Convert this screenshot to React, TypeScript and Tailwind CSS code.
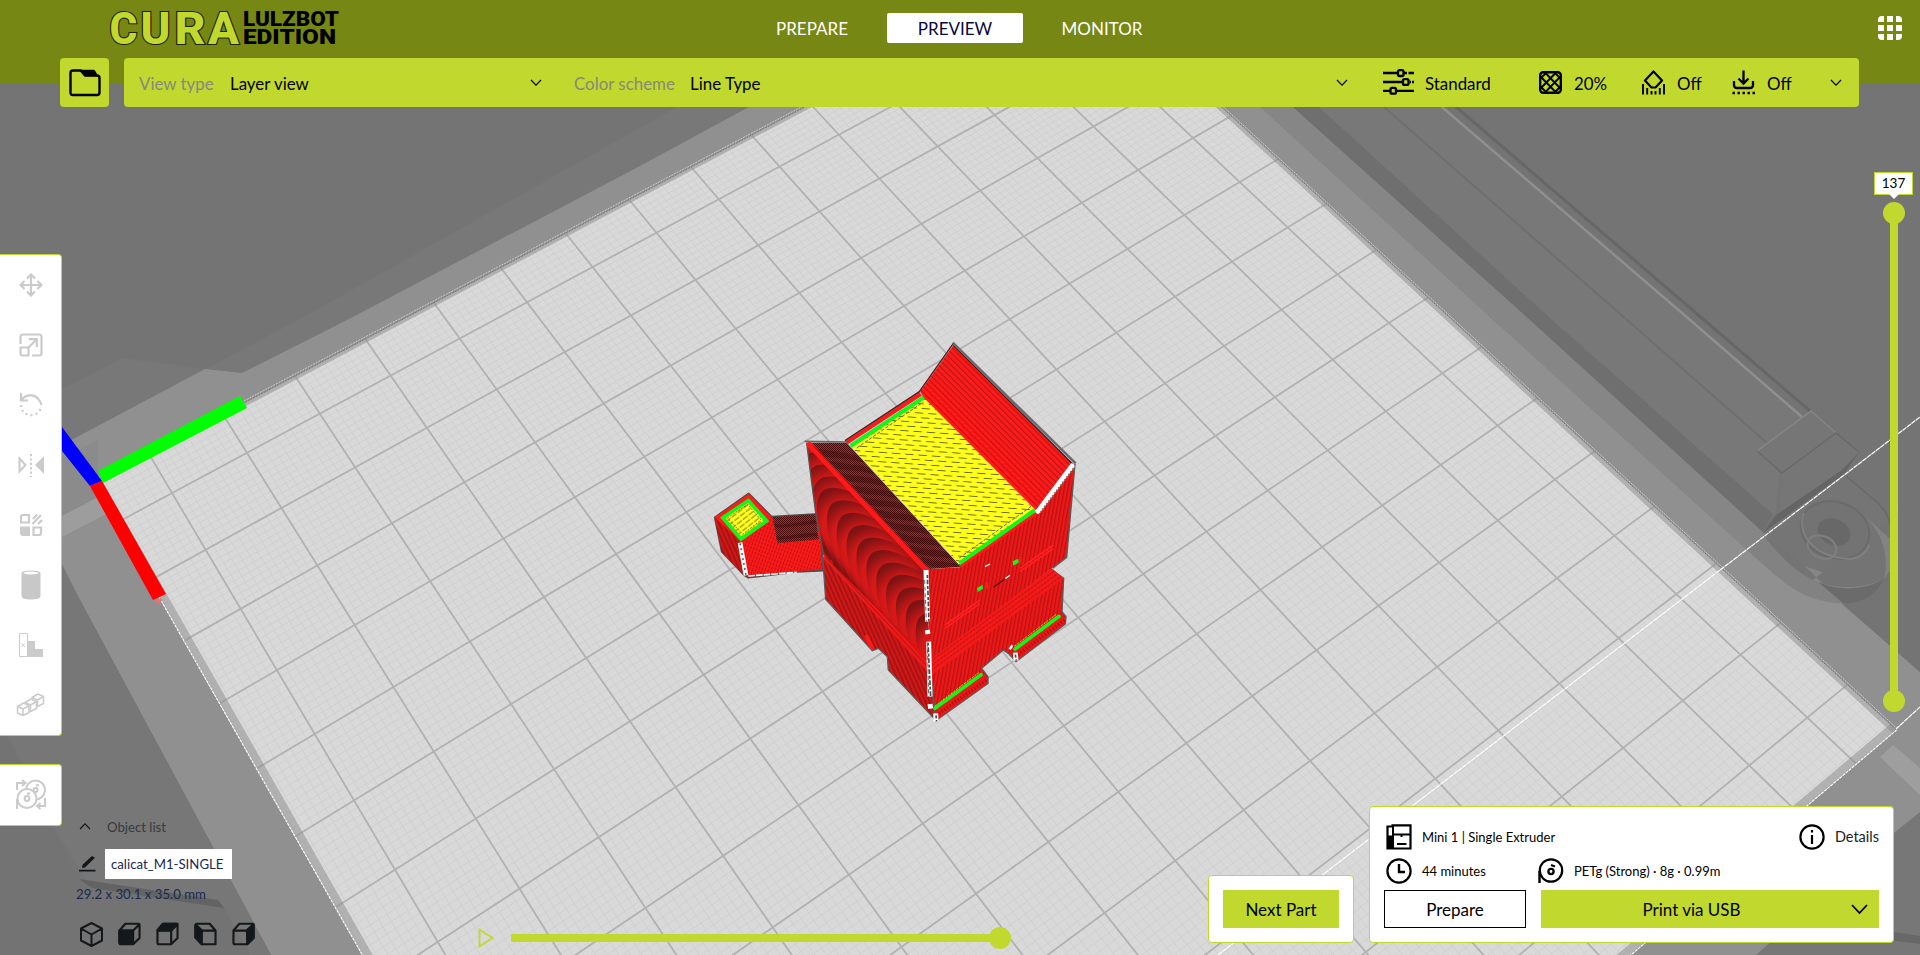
import React from "react";

type Pt = [number, number];

/* ---------- build plate projection ---------- */

function solve(a: number[][], b: number[]): number[] {
  const n = b.length;
  const m = a.map((r, i) => [...r, b[i]]);
  for (let c = 0; c < n; c++) {
    let p = c;
    for (let r = c + 1; r < n; r++) if (Math.abs(m[r][c]) > Math.abs(m[p][c])) p = r;
    [m[c], m[p]] = [m[p], m[c]];
    for (let r = 0; r < n; r++) {
      if (r === c) continue;
      const f = m[r][c] / m[c][c];
      for (let k = c; k <= n; k++) m[r][k] -= f * m[c][k];
    }
  }
  return m.map((r, i) => r[n] / r[i]);
}

const anchors: { plate: Pt; screen: Pt }[] = [
  { plate: [1, 1], screen: [172, 493] },
  { plate: [7, 1], screen: [395, 869.7] },
  { plate: [15, 15], screen: [1807.3, 717.7] },
  { plate: [1, 11], screen: [838.8, 134.7] },
];

const H = (() => {
  const a: number[][] = [];
  const b: number[] = [];
  for (const { plate, screen } of anchors) {
    const [u, v] = plate;
    const [x, y] = screen;
    a.push([u, v, 1, 0, 0, 0, -u * x, -v * x]);
    b.push(x);
    a.push([0, 0, 0, u, v, 1, -u * y, -v * y]);
    b.push(y);
  }
  return solve(a, b);
})();

function project(u: number, v: number): Pt {
  const w = H[6] * u + H[7] * v + 1;
  return [(H[0] * u + H[1] * v + H[2]) / w, (H[3] * u + H[4] * v + H[5]) / w];
}

const pts = (list: Pt[]) =>
  list
    .map(([u, v]) => project(u, v))
    .map(([x, y]) => `${x.toFixed(1)},${y.toFixed(1)}`)
    .join(" ");

const LO = 0.28;
const HI = 15.71;

function seg(u1: number, v1: number, u2: number, v2: number) {
  const [a, b] = project(u1, v1);
  const [c, d] = project(u2, v2);
  return `M${a.toFixed(1)} ${b.toFixed(1)}L${c.toFixed(1)} ${d.toFixed(1)}`;
}

let minor = "";
let major = "";
for (let k = 3; k <= 157; k++) {
  const t = k / 10;
  const d = seg(t, LO, t, HI) + seg(LO, t, HI, t);
  if (k % 10 === 0) major += d;
  else minor += d;
}

/* ---------- 3D viewport ---------- */

const ARCH = "M40 160C8 100 -16 0 20 -28C45 -46 90 -34 130 -10L200 40L220 260L60 220Z";

function Model() {
  const arches = Array.from({ length: 11 }, (_, k) => k);
  return (
    <g transform="translate(680 320) scale(0.33333)">
      <defs>
        <pattern id="front" width="11" height="24" patternUnits="userSpaceOnUse" patternTransform="rotate(10)">
          <rect width="11" height="24" fill="#ee1818" />
          <rect width="4" height="24" fill="#b81212" />
        </pattern>
        <pattern id="side" width="12" height="24" patternUnits="userSpaceOnUse" patternTransform="rotate(-24)">
          <rect width="12" height="24" fill="#d21717" />
          <rect width="5" height="24" fill="#a01212" />
        </pattern>
        <pattern id="slope" width="24" height="13" patternUnits="userSpaceOnUse" patternTransform="rotate(45)">
          <rect width="24" height="13" fill="#ff1a1a" />
          <rect width="24" height="3" fill="#b51414" />
        </pattern>
        <pattern id="mesh" width="6" height="6" patternUnits="userSpaceOnUse">
          <rect width="6" height="6" fill="#e01616" />
          <rect width="3" height="3" fill="#4a0808" />
          <rect x="3" y="3" width="3" height="3" fill="#4a0808" />
        </pattern>
        <pattern id="skin" width="40" height="28" patternUnits="userSpaceOnUse" patternTransform="rotate(4)">
          <rect width="40" height="28" fill="#ffff1e" />
          <path d="M2 4h25M22 18h18M0 18h7" stroke="#66660c" strokeWidth="3" />
        </pattern>
        <pattern id="skin2" width="22" height="13" patternUnits="userSpaceOnUse" patternTransform="rotate(-38)">
          <rect width="22" height="13" fill="#ffff1e" />
          <path d="M0 3h18" stroke="#7a7a0c" strokeWidth="3" />
        </pattern>
        <pattern id="tail" width="9" height="12" patternUnits="userSpaceOnUse" patternTransform="rotate(20)">
          <rect width="9" height="12" fill="#fb1919" />
          <rect width="3" height="9" fill="#bb1212" />
        </pattern>
        <radialGradient id="arch" gradientUnits="userSpaceOnUse" cx="88" cy="76" r="114">
          <stop offset="0" stopColor="#dc1818" />
          <stop offset="0.6" stopColor="#d61818" />
          <stop offset="0.86" stopColor="#9a1515" />
          <stop offset="1" stopColor="#7e1313" />
        </radialGradient>
        <clipPath id="faceClip">
          <path d="M380 372L738 752L748 1020L430 705L408 585Z" />
        </clipPath>
        <clipPath id="earClip">
          <path d="M385 368L500 368L842 740L738 748Z" />
        </clipPath>
      </defs>

      {/* tail */}
      <g stroke="#4c4c4c" strokeWidth="5" strokeLinejoin="round">
        <path d="M275 590L405 582L425 660L430 752L350 756L205 773L193 766L125 695L104 592L206 520Z" fill="url(#tail)" />
      </g>
      <path d="M104 592L180 660L193 766L125 695Z" fill="url(#side)" />
      <path d="M277 592L405 583L416 658L292 670Z" fill="url(#mesh)" />
      <path d="M280 612C330 618 370 600 410 600L412 612C370 612 330 627 286 622ZM288 650C330 650 370 636 412 640L414 648L292 660Z" fill="#2b0000" opacity="0.35" />
      <path d="M104 592L206 522L275 592L183 666Z" fill="#ff1a1a" />
      <path d="M128 593L205 542L260 603L183 657Z" fill="url(#skin2)" stroke="#14f51e" strokeWidth="11" />
      <path d="M142 594L203 553L243 600L188 643Z" fill="none" stroke="#77770c" strokeWidth="3" strokeDasharray="6 4" />
      <path d="M180 668L198 766" stroke="#fff" strokeWidth="14" />
      <path d="M180 670L198 766" stroke="#666" strokeWidth="5" strokeDasharray="6 9" />
      <path d="M205 768L350 757" stroke="#fff" strokeWidth="5" strokeDasharray="20 3" />

      {/* lower body */}
      <path d="M428 710L752 1060L765 1198L625 1050L622 1010L595 985L577 992L437 838Z" fill="url(#side)" stroke="#5a5a5a" strokeWidth="4" />
      <path d="M752 1060L1118 750L1151 775L1146 875L1158 890L1156 912L1008 1025L985 1000L970 990L905 1045L924 1070L924 1090L768 1202Z" fill="url(#front)" stroke="#5a5a5a" strokeWidth="4" />
      <path d="M768 1172L912 1062L922 1074L922 1090L768 1200Z" fill="#e81818" />
      <path d="M1005 995L1143 884L1156 894L1154 911L1008 1022Z" fill="#e81818" />
      <path d="M768 1186L922 1078M1006 1010L1154 900" stroke="#a81212" strokeWidth="10" strokeDasharray="4 6" />
      <path d="M765 1158L896 1058M1004 978L1130 882" stroke="#e6e01a" strokeWidth="3" strokeDasharray="6 4" />
      <path d="M765 1165L903 1064M1005 987L1137 889" stroke="#14f51e" strokeWidth="11" strokeLinecap="round" />
      <path d="M560 950L577 984" stroke="#ff1a1a" strokeWidth="12" strokeLinecap="round" />

      {/* ledge */}
      <path d="M428 712L452 700L752 1010L752 1066Z" fill="#ee1818" />
      <path d="M436 710L752 1050M442 705L752 1034M448 703L752 1020" stroke="#b21212" strokeWidth="3" />
      <path d="M750 1012L1115 745L1151 776L752 1068Z" fill="#f21919" />
      <path d="M752 1024L1122 754M752 1038L1132 762M752 1052L1142 770" stroke="#b81212" strokeWidth="3" strokeDasharray="9 3" />

      {/* front face */}
      <path d="M738 748L840 742L1070 575L1185 432L1160 712L1112 748L750 1018Z" fill="url(#front)" />
      <path d="M1185 432L1160 712L1118 745" fill="none" stroke="#5a5a5a" strokeWidth="4" />
      <path d="M795 925L900 850M1020 755L1120 685M795 915L900 840M1020 745L1120 675" stroke="#ff2020" strokeWidth="5" />
      <path d="M840 738L1070 577" stroke="#ff1a1a" strokeWidth="12" />

      {/* left face */}
      <path d="M380 372L738 752L748 1020L430 705L408 585Z" fill="#c21717" />
      <g clipPath="url(#faceClip)">
        {[0, 1, 2].map((k) => (
          <g key={k} transform={`translate(${350 + k * 20} ${428 + k * 36})`}>
            <path d="M0 140C0 40 0 -10 40 -28C62 -34 90 -30 130 -10L200 40L220 260L60 220Z" fill="url(#arch)" />
          </g>
        ))}
        {arches.map((k) => (
          <g key={k} transform={`translate(${409 + k * 29.6} ${540 + k * 37.3})`}>
            <path d={ARCH} fill="url(#arch)" />
          </g>
        ))}
      </g>
      <path d="M380 368L394 480L408 585L430 700" fill="none" stroke="#555" strokeWidth="4" />

      {/* left ear, inside */}
      <path d="M385 368L500 368L842 740L738 748Z" fill="url(#mesh)" />
      <g clipPath="url(#earClip)">
        {arches.map((k) => (
          <path
            key={k}
            d={`M${380 + k * 38} ${375 + k * 37}c50 24 100 10 200 48l0 14c-90 -32 -130 -16 -190 -38z`}
            fill="#200000"
            opacity="0.28"
          />
        ))}
      </g>
      <path d="M388 374L738 748" stroke="#ff1a1a" strokeWidth="17" strokeLinecap="round" />
      <path d="M400 378L742 742" stroke="#a11212" strokeWidth="3" />
      <path d="M374 364L502 366" stroke="#666" strokeWidth="5" />

      {/* top skin */}
      <path d="M735 232L1062 565L838 732L512 378Z" fill="url(#skin)" />
      <path d="M838 714L1055 558M530 384L730 246" stroke="#6b6b0c" strokeWidth="3" strokeDasharray="10 5" />
      <path d="M512 378L733 231M838 730L1065 570" stroke="#14f51e" strokeWidth="12" />
      <path d="M500 368L722 222" stroke="#ff1a1a" strokeWidth="12" />
      <path d="M495 362L718 215L820 70" fill="none" stroke="#4a2020" strokeWidth="4" />

      {/* right ear */}
      <path d="M820 76L1183 437L1072 575L733 235L720 215Z" fill="url(#slope)" />
      <path d="M820 76L1183 437" stroke="#5a0c0c" strokeWidth="4" />
      <path d="M818 68L1187 430" stroke="#6c6c6c" strokeWidth="8" />
      <path d="M1176 438L1074 574" stroke="#fff" strokeWidth="15" strokeLinecap="round" />
      <path d="M1180 446L1082 576" stroke="#777" strokeWidth="6" strokeDasharray="4 6" />

      {/* eyes and mouth */}
      <path d="M998 724L1015 716L1016 728L1000 737ZM891 804L908 795L909 806L893 816Z" fill="#14f51e" />
      <path d="M1021 710v20M920 786v20" stroke="#ff1a1a" strokeWidth="8" />
      <path d="M940 802L988 768" stroke="#5a1010" strokeWidth="4" />
      <path d="M915 740L930 732M976 776L990 766" stroke="#fff" strokeWidth="4" />

      {/* seams */}
      <path d="M738 750L743 905M742 930L744 942M746 965L750 1130M750 1152L752 1166M767 1180L768 1204M1006 998L1008 1022M990 980L996 984" stroke="#fff" strokeWidth="15" />
      <path d="M742 765L747 905M744 968L752 1130M768 1186L770 1204M1006 1004L1009 1022" stroke="#4a4a4a" strokeWidth="5" strokeDasharray="9 5 14 5" />
      <path d="M734 780L739 905M742 968L746 1130" stroke="#666" strokeWidth="3" strokeDasharray="12 8" />
    </g>
  );
}

function Viewport() {
  return (
    <svg className="absolute inset-0" width="1920" height="955" viewBox="0 0 1920 955" fill="none">
      <rect width="1920" height="955" fill="#747474" />
      {/* printer frame, left */}
      <path d="M0 422L122 358L205 369L302 318L707 90L800 90L400 560L80 620L0 600Z" fill="#787878" />
      <path d="M0 478L205 369L242 373L347 320L640 166L780 90H1260L1492 319L1763 535L1920 672V955H271L80 600L0 440Z" fill="#909090" />
      <path d="M62 458L98 440V497L62 516Z" fill="#8b8b8b" />
      <path d="M62 516L104 494L110 512L62 537Z" fill="#9d9d9d" />
      <path d="M0 450L62 568L80 600L271 955H250L224 908L92 888L53 827L0 720Z" fill="#777" />
      <path d="M0 722L53 827L79 879L92 888L224 908L250 955H0Z" fill="#737373" />
      <path d="M79 879L218 900L224 908L92 888Z" fill="#636363" />
      {/* printer frame, right */}
      <path d="M1260 107H1293L1529 319L1763 532L1787 560L1877 590C1868 602 1855 603 1843 603C1800 601 1785 583 1747 550L1600 417L1492 319Z" fill="#868686" />
      <path d="M1293 107H1319L1551 319L1773 513L1763 532L1529 319Z" fill="#6f6f6f" />
      <path d="M1319 107H1441L1802 417L1767 443L1780 473L1775 516L1551 319Z" fill="#787878" />
      <path d="M1384 107L1626 319L1767 443" stroke="#6f6f6f" strokeWidth="2" />
      <path d="M1442 107L1689 319L1802 417" stroke="#8f8f8f" strokeWidth="2.5" />
      <path d="M1456 107L1703 319L1810 411" stroke="#676767" strokeWidth="3" />
      <path d="M1763 532L1845 473C1870 492 1885 505 1890 520V560L1875 590L1787 560Z" fill="#757575" />
      <path d="M1763 535L1790 552L1843 603L1920 672V500L1890 520L1800 590Z" fill="#747474" />
      <path d="M1763 535C1785 562 1800 575 1818 582C1840 590 1865 588 1884 579C1872 603 1850 604 1838 603C1800 600 1787 585 1747 550Z" fill="#828282" />
      <path d="M1818 582C1840 592 1865 590 1884 579C1874 600 1855 604 1843 603Z" fill="#6b6b6b" />
      <path d="M1757 451L1811 411L1859 452L1842 474L1763 532L1780 510L1782 473Z" fill="#767676" />
      <path d="M1757 451L1811 411L1836 433" stroke="#858585" strokeWidth="1.600" />
      <path d="M1757 451L1782 473L1836 433L1859 452" stroke="#696969" strokeWidth="1.4" />
      <path d="M1859 452L1844 474L1763 533L1776 515L1842 470Z" fill="#656565" />
      <path d="M1846 476L1878 503Q1888 513 1890 524" stroke="#696969" strokeWidth="1.6" />
      <path d="M1866 517L1889 538Q1900 545 1898 560L1884 579Q1892 545 1866 517Z" fill="#838383" />
      <ellipse cx="1835" cy="530" rx="35" ry="28" transform="rotate(20 1835 530)" fill="#737373" stroke="#6b6b6b" strokeWidth="2" />
      <path d="M1804 513C1796 532 1812 558 1852 559Q1866 556 1869 545" stroke="#818181" strokeWidth="1.8" />
      <ellipse cx="1834" cy="532" rx="17" ry="13" transform="rotate(25 1834 532)" fill="#686868" />
      <ellipse cx="1822" cy="547" rx="15" ry="11" transform="rotate(25 1822 547)" stroke="#7f7f7f" strokeWidth="2" />
      {/* lower right frame */}
      <path d="M1893 745L1920 768V795L1880 757Z" fill="#9e9e9e" />
      <path d="M1920 812L1894 833L1756 955H1920Z" fill="#777" />
      <path d="M1880 930L1920 936V944L1880 939Z" fill="#686868" />

      {/* build plate */}
      <polygon points={pts([[LO, LO], [HI, LO], [HI, HI], [LO, HI]])} fill="#d9d9d9" />
      <path d={minor} stroke="#cfcfcf" strokeWidth="0.9" />
      <path d={major} stroke="#b1b1b1" strokeWidth="1.8" />
      <polygon points={pts([[LO, LO], [HI, LO], [HI, LO + 0.09], [LO, LO + 0.09]])} fill="#8a8a8a" opacity="0.5" />
      <polygon points={pts([[HI - 0.09, LO], [HI, LO], [HI, HI], [HI - 0.09, HI]])} fill="#8a8a8a" opacity="0.5" />
      <polygon points={pts([[LO, LO], [LO + 0.06, LO], [LO + 0.06, HI], [LO, HI]])} fill="#8a8a8a" opacity="0.5" />
      <polygon points={pts([[LO, HI - 0.07], [HI, HI - 0.07], [HI, HI], [LO, HI]])} fill="#8a8a8a" opacity="0.5" />
      <path d={seg(LO, LO, LO, HI) + seg(LO, HI, HI, HI)} stroke="#777" strokeWidth="1" strokeDasharray="2 1" />
      <path d={seg(LO - 0.03, LO, LO - 0.03, HI) + seg(LO, HI + 0.02, HI, HI + 0.02)} stroke="#dcdcdc" strokeWidth="0.8" strokeDasharray="2 1" />
      <path d={seg(LO, LO, HI, LO) + seg(HI, LO, HI, HI)} stroke="#fff" strokeWidth="1.1" strokeDasharray="3 1" />
      <path d="M1218 955L1600 662L1920 417M1896 729L1920 707" stroke="#fff" strokeWidth="1.2" strokeDasharray="5 0.6" />

      {/* axes */}
      <path d="M98 471L240 396L247 408L103 483Z" fill="#0f0" />
      <path d="M50 411L62 427L102 481L90 486L50 436Z" fill="#00f" />
      <path d="M90 486L102 481L166 594L153 600Z" fill="#f00" />
      <path d="M155 600L161 598L162 601L157 604Z" fill="#e57373" />
      <Model />
    </svg>
  );
}

/* ---------- icons ---------- */

type IconProps = { className?: string };

const Chevron = ({ className = "" }: IconProps) => (
  <svg width="12" height="8" viewBox="0 0 12 8" fill="none" stroke="currentColor" strokeWidth="1.2" className={className}>
    <path d="M1 1l5 5.2L11 1" />
  </svg>
);

const Folder = () => (
  <svg width="32" height="28" viewBox="0 0 32 28" fill="none" stroke="#000" strokeWidth="2.4" strokeLinejoin="round">
    <path d="M1.500 4Q1.500 1.500 4 1.500H12L16 6.500H28Q30.500 6.500 30.500 9V23.500Q30.500 26 28 26H4Q1.500 26 1.500 23.500Z" />
    <path d="M11 1.500H25L28 6.500H16Z" fill="#000" strokeWidth="1.500" />
  </svg>
);

const Sliders = () => (
  <svg width="31" height="26" viewBox="0 0 31 26" fill="none" stroke="#000" strokeWidth="2.300">
    <path d="M0 4H14M21 4H24M25.500 4H31M0 13H19M26.500 13H28M29 13H31M0 21.800H7M14 21.800H31" />
    <rect x="15" y="1.200" width="5.500" height="5.800" rx="1.500" />
    <rect x="20" y="10.100" width="5.500" height="5.800" rx="1.500" />
    <rect x="7.500" y="18.900" width="5.500" height="5.800" rx="1.500" />
  </svg>
);

const Infill = () => (
  <svg width="23" height="23" viewBox="0 0 23 23" fill="none" stroke="#000">
    <rect x="1.200" y="1.200" width="20.600" height="20.600" rx="3" strokeWidth="2.400" />
    <path d="M1.500 7.500L7.500 1.500M1.500 17.500L17 1.500M6 21.500L21.500 5.500M15.500 21.500L21.500 15.500M1.500 15.500L7.500 21.500M1.500 5.500L17 21.500M6 1.500L21.500 17.500M15.500 1.500L21.500 7.500" strokeWidth="1.900" />
  </svg>
);

const Support = () => (
  <svg width="23" height="25" viewBox="0 0 23 25" fill="none" stroke="#000" strokeWidth="2.200">
    <path d="M11.500 1.500L20 10.500L13.500 17.500H9.500L3 10.500Z" strokeLinejoin="round" />
    <path d="M1 14V24.500M5.200 18V24.500M9.500 21V24.500M13.500 21V24.500M17.800 18V24.500M22 14V24.500" strokeWidth="1.900" />
  </svg>
);

const Adhesion = () => (
  <svg width="23" height="25" viewBox="0 0 23 25" fill="none" stroke="#000" strokeWidth="2.300">
    <path d="M11.500 0.500V13M6.500 8.500L11.500 13.500L16.500 8.500M2 11V15Q2 18 5 18H18Q21 18 21 15V11" />
    <path d="M0.500 23H23" strokeDasharray="2.400 2.600" />
  </svg>
);

const Apps = () => (
  <svg width="24" height="24" viewBox="0 0 24 24" fill="#fff">
    <path d="M6 0V6H0V4Q0 0 4 0ZM9 0H15V6H9ZM18 0H20Q24 0 24 4V6H18ZM0 9H6V15H0ZM9 9H15V15H9ZM18 9H24V15H18ZM0 18H6V24H4Q0 24 0 20ZM9 18H15V24H9ZM18 18H24V20Q24 24 20 24H18Z" />
  </svg>
);

const MoveIcon = () => (
  <svg width="24" height="24" viewBox="0 0 24 24" fill="none" stroke="#cbcbcb" strokeWidth="2.200">
    <path d="M12 2V22M2 12H22M8 5.500L12 1.500L16 5.500M8 18.500L12 22.500L16 18.500M5.500 8L1.500 12L5.500 16M18.500 8L22.500 12L18.500 16" />
  </svg>
);

const ScaleIcon = () => (
  <svg width="24" height="24" viewBox="0 0 24 24" fill="none" stroke="#cbcbcb" strokeWidth="2.200">
    <path d="M1.500 11V4Q1.500 1.500 4 1.500H20Q22.500 1.500 22.500 4V20Q22.500 22.500 20 22.500H13" />
    <path d="M1.500 14.500H9.500V22.500H4Q1.500 22.500 1.500 20ZM9.500 14.500L17.500 6.500M10 6.200H17.800V14" />
  </svg>
);

const RotateIcon = () => (
  <svg width="26" height="26" viewBox="0 0 26 26" fill="none" stroke="#cbcbcb" strokeWidth="2.200">
    <path d="M3 1V8.500H10M3 8.500C8 1 20 1 23.500 13" />
    <path d="M22.500 17C19 25 7 26 3.200 16V12" strokeWidth="2.200" strokeDasharray="2 3.200" />
  </svg>
);

const MirrorIcon = () => (
  <svg width="26" height="24" viewBox="0 0 26 24" fill="none" stroke="#cbcbcb" strokeWidth="2">
    <path d="M13 1V24" strokeDasharray="2.200 2.200" />
    <path d="M1.500 5.500L7.500 12L1.500 18.500Z" />
    <path d="M25 5.500L18.500 12L25 18.500Z" fill="#cbcbcb" />
  </svg>
);

const MeshIcon = () => (
  <svg width="24" height="24" viewBox="0 0 24 24" fill="none" stroke="#cbcbcb" strokeWidth="2.200">
    <path d="M10 2V9.500H2V4Q2 2 4 2ZM14.500 14.500H22V20Q22 22 20 22H14.500Z" />
    <path d="M1 13.500H11V23H4Q1 23 1 20Z" fill="#cbcbcb" stroke="none" />
    <path d="M14 6L18 1.500M13.500 11L22 2M19 11L23 7" />
  </svg>
);

const CylinderIcon = () => (
  <svg width="20" height="30" viewBox="0 0 20 30">
    <path d="M0.500 3Q0.500 0.500 10 0.500Q19.500 0.500 19.500 3V26Q19.500 29.500 10 29.500Q0.500 29.500 0.500 26Z" fill="#c8c8c8" />
    <ellipse cx="10" cy="3" rx="7.500" ry="1.500" fill="#fff" />
  </svg>
);

const StairsIcon = () => (
  <svg width="24" height="24" viewBox="0 0 24 24">
    <path d="M8 8H16V16H24V24H8Z" fill="#cbcbcb" />
    <path d="M0.500 0.500H8.500V23.500H0.500ZM2.500 10.500L6 14M6 10.500L2.500 14" fill="none" stroke="#cbcbcb" />
  </svg>
);

const cubeUnit = "M0 3.500L6 0L11.500 2.500V9.500L5.500 12.500L0 10ZM0 3.500L5.500 6V12.500M5.500 6L11.500 2.500";
const CubesIcon = () => (
  <svg width="30" height="24" viewBox="0 0 30 24" fill="#fff" stroke="#cbcbcb" strokeWidth="1.500" strokeLinejoin="round">
    <path d={cubeUnit} transform="translate(16 1)" />
    <path d={cubeUnit} transform="translate(9 6)" />
    <path d={cubeUnit} transform="translate(1.500 10)" />
  </svg>
);

const SpoolSwapIcon = () => (
  <svg width="32" height="32" viewBox="0 0 32 32" fill="none" stroke="#cbcbcb" strokeWidth="2">
    <circle cx="20.500" cy="11" r="9.500" />
    <circle cx="20.500" cy="11" r="2" />
    <path d="M21 6.500L24 6" />
    <circle cx="12" cy="19.500" r="9.500" fill="#fff" />
    <circle cx="12" cy="19.500" r="2.400" />
    <path d="M12 15L15 14M2 20V30M2 11V4H9M7 1L10.500 4L7 7M30 19V27H23.500M25.500 24L22 27L25.500 30" />
  </svg>
);

const PrinterIcon = () => (
  <svg width="26" height="26" viewBox="0 0 26 26" fill="none" stroke="#000" strokeWidth="2.200">
    <path d="M6.500 1.300H24.500V24.500H1.500V2.500H6.500Z" />
    <path d="M1 11.500H7.500V25H1Z" fill="#000" stroke="none" />
    <path d="M7 1.500V25M6.500 10.500H24M15.500 10.500V13M11 20H20.500" strokeWidth="2" />
  </svg>
);

const ClockIcon = () => (
  <svg width="26" height="26" viewBox="0 0 26 26" fill="none" stroke="#000" strokeWidth="2.200">
    <circle cx="13" cy="13" r="11.600" />
    <path d="M13 6V14H19" strokeWidth="2.400" />
  </svg>
);

const SpoolIcon = () => (
  <svg width="26" height="26" viewBox="0 0 26 26" fill="none" stroke="#000" strokeWidth="2.200">
    <circle cx="13" cy="12.500" r="11.200" />
    <path d="M1.500 13V25" strokeWidth="2.400" />
    <circle cx="13" cy="13.500" r="2.600" strokeWidth="2.300" />
    <path d="M13 7L17 8.500" strokeWidth="2" />
  </svg>
);

const InfoIcon = () => (
  <svg width="26" height="26" viewBox="0 0 26 26" fill="none" stroke="#000" strokeWidth="2.200">
    <circle cx="13" cy="13" r="11.600" />
    <path d="M13 11V20M13 6V8.500" />
  </svg>
);

const PencilIcon = () => (
  <svg width="17" height="16" viewBox="0 0 17 16" fill="#15181b">
    <path d="M3 12L3.500 8.800L13 0L16 1.800L6 11.500ZM0 13.800H16.500V15.500H0Z" />
  </svg>
);

const viewShapes: { id: string; fill: string }[] = [
  { id: "front", fill: "M1.500 8.500H15V22H3Q1.500 22 1.500 20.500Z" },
  { id: "top", fill: "M1.500 8L7 1.500H22L16 8Z" },
  { id: "left", fill: "M1.500 3L8 8.500V22.500L1.500 15.500Z" },
  { id: "right", fill: "M15.500 8L22 2V16L15.500 22.500Z" },
];

function ViewCubes() {
  return (
    <div className="flex h-6 items-center gap-[15px] pl-[5px]">
      <svg width="23" height="25" viewBox="0 0 23 25" fill="none" stroke="#15181b" strokeWidth="2" strokeLinejoin="round">
        <path d="M11.500 1L22 6.500V18.500L11.500 24L1 18.500V6.500ZM1 6.500L11.500 12.500L22 6.500M11.500 12.500V24" />
      </svg>
      {viewShapes.map(({ id, fill }) => (
        <svg key={id} width="23" height="24" viewBox="0 0 23.500 24" fill="none" stroke="#15181b" strokeWidth="2.200" strokeLinejoin="round">
          {id === "left" ? (
            <path d="M8 8.500H22V22.500H8L1.500 15.500V3Q1.500 1.500 3 1.500H16L22 8.500M8 8.500L1.500 2" />
          ) : (
            <path d="M1.500 8.500H15.500V22.500H3Q1.500 22.500 1.500 21ZM1.500 8.500L7.500 1.500H21Q22 1.500 22 2.500V16L15.500 22.500M15.500 8.500L22 2" />
          )}
          <path d={fill} fill="#15181b" />
        </svg>
      ))}
    </div>
  );
}

/* ---------- chrome ---------- */

function Logo() {
  const letters: [string, number, number][] = [
    ["C", 109.5, 28],
    ["U", 140.5, 30],
    ["R", 174.5, 31],
    ["A", 208, 31],
  ];
  return (
    <svg width="360" height="58" viewBox="0 0 360 58" className="font-['Roboto','Liberation_Sans',sans-serif]">
      {letters.map(([ch, x, w]) => (
        <text
          key={ch}
          x={x}
          y="43.700"
          fontSize="43.500"
          fontWeight="800"
          textLength={w}
          lengthAdjust="spacingAndGlyphs"
          fill="#c1d82f"
          stroke="#1c2200"
          strokeWidth="2.200"
          paintOrder="stroke"
        >
          {ch}
        </text>
      ))}
      <text x="243" y="26" fontSize="19.500" fontWeight="900" textLength="96" lengthAdjust="spacingAndGlyphs" fill="#000">
        LULZBOT
      </text>
      <text x="243" y="44" fontSize="20" fontWeight="900" textLength="93" lengthAdjust="spacingAndGlyphs" fill="#000">
        EDITION
      </text>
    </svg>
  );
}

function Header() {
  return (
    <header className="flex h-[58px] items-start">
      <Logo />
      <nav className="ml-[385px] mt-[13px] flex h-[30px] gap-2 text-[17px] leading-8 text-white">
        <span className="w-[134px] text-center">PREPARE</span>
        <span className="h-[30px] w-[136px] rounded-[2px] bg-white text-center text-[#08083c]">PREVIEW</span>
        <span className="w-[142px] text-center">MONITOR</span>
      </nav>
      <div className="ml-auto mr-[18px] mt-4">
        <Apps />
      </div>
    </header>
  );
}

function StageBar() {
  return (
    <div className="flex h-[49px] gap-[15px] pl-[60px] pr-[61px] text-[16.900px] text-black">
      <button className="flex w-[49px] items-center justify-center rounded bg-[#c1d82f]">
        <Folder />
      </button>
      <div className="flex flex-1 items-center rounded bg-[#c1d82f] pl-[15px]">
        <span className="w-[91px] pt-0.5 text-[#87897b]">View type</span>
        <span className="w-[300px] pt-0.5">Layer view</span>
        <Chevron />
        <span className="ml-8 w-[116px] pt-0.5 text-[#87897b]">Color scheme</span>
        <span className="w-[646px] pt-0.5">Line Type</span>
        <Chevron />
        <div className="ml-[35px] flex w-[156px] items-center gap-[11px]">
          <Sliders />
          <span className="pt-0.5">Standard</span>
        </div>
        <div className="flex w-[103px] items-center gap-3">
          <Infill />
          <span className="pt-0.5">20%</span>
        </div>
        <div className="flex w-[90px] items-center gap-3">
          <Support />
          <span className="pt-0.5">Off</span>
        </div>
        <div className="flex w-[98px] items-center gap-3">
          <Adhesion />
          <span className="pt-0.5">Off</span>
        </div>
        <Chevron />
      </div>
    </div>
  );
}

const tools = [MoveIcon, ScaleIcon, RotateIcon, MirrorIcon, MeshIcon, CylinderIcon, StairsIcon, CubesIcon];

function Toolbar() {
  return (
    <aside className="flex w-[62px] flex-col gap-7 pt-[147px]">
      <div className="flex h-[482px] flex-col rounded-r border-y border-r border-[#c1d82f] bg-white">
        {tools.map((Tool, i) => (
          <button key={i} className="flex h-[60px] items-center justify-center">
            <Tool />
          </button>
        ))}
      </div>
      <button className="flex h-[62px] items-center justify-center rounded-r border-y border-r border-[#c1d82f] bg-white">
        <SpoolSwapIcon />
      </button>
    </aside>
  );
}

function ObjectPanel() {
  return (
    <section className="ml-[13px] flex w-[402px] flex-col self-end pb-[9px] text-[13.200px] text-[#192850]">
      <div className="flex h-6 items-center gap-4 pl-[4px] text-[13.200px] text-[#37393b]">
        <Chevron className="mb-1 rotate-180 text-[#15181b]" />
        <span>Object list</span>
      </div>
      <div className="mt-[9px] flex h-[30px] items-center gap-[9px] pl-[4px]">
        <PencilIcon />
        <span className="flex h-[30px] w-[127px] items-center bg-white pl-[6px] pt-0.5">calicat_M1-SINGLE</span>
      </div>
      <div className="mt-[4px] h-[22px] pl-px leading-[22px]">29.2 x 30.1 x 35.0 mm</div>
      <div className="mt-[17px]">
        <ViewCubes />
      </div>
    </section>
  );
}

function Timeline() {
  return (
    <div className="mb-[6px] flex w-[534px] items-center self-end">
      <svg width="18" height="20" viewBox="0 0 18 20" fill="none" stroke="#c1d82f" strokeWidth="1.800">
        <path d="M2.500 1.500V18.500L15.500 10Z" />
      </svg>
      <div className="ml-4 h-2 w-[483px] rounded-l-[1px] bg-[#c1d82f]" />
      <div className="-ml-[5px] size-[22px] rounded-full bg-[#c1d82f]" />
    </div>
  );
}

function ActionCards() {
  return (
    <div className="mb-3 ml-auto mr-[26px] flex items-end gap-[15px] self-end text-black">
      <div className="h-[68px] w-[146px] rounded border border-[#c1d82f] bg-white p-[14px]">
        <button className="h-[38px] w-full bg-[#c1d82f] pt-0.5 text-[17px]">Next Part</button>
      </div>
      <div className="flex h-[137px] w-[525px] flex-col rounded border border-[#c1d82f] bg-white px-[14px] pt-4 text-[13px]">
        <div className="flex h-[27px] items-center pl-[2px]">
          <PrinterIcon />
          <span className="ml-[10px] pt-0.5">Mini 1 | Single Extruder</span>
          <span className="ml-auto flex items-center gap-[10px] text-[14.500px] text-[#222]">
            <InfoIcon />
            Details
          </span>
        </div>
        <div className="mt-[7px] flex h-[27px] items-center pl-[2px]">
          <ClockIcon />
          <span className="ml-[10px] w-[116px] pt-0.5">44 minutes</span>
          <SpoolIcon />
          <span className="ml-[10px] pt-0.5">PETg (Strong) · 8g · 0.99m</span>
        </div>
        <div className="mt-[6px] flex h-[38px] gap-[15px] text-[17px]">
          <button className="w-[142px] border border-black bg-white pt-0.5">Prepare</button>
          <button className="flex flex-1 items-center bg-[#c1d82f] pr-[11px]">
            <span className="flex-1 pr-[9px] pt-0.5 text-center">Print via USB</span>
            <svg width="17" height="11" viewBox="0 0 17 11" fill="none" stroke="#000" strokeWidth="1.800">
              <path d="M1 1L8.500 9L16 1" />
            </svg>
          </button>
        </div>
      </div>
    </div>
  );
}

function LayerSlider() {
  return (
    <div className="absolute left-[1874px] top-[172px] flex w-[39px] flex-col items-center">
      <div className="relative flex h-[23px] w-full items-center justify-center border border-[#c1d82f] bg-white text-[13.500px] text-black">
        137
        <svg width="10" height="5" viewBox="0 0 10 5" className="absolute left-[14px] top-[21px]">
          <path d="M0 0H10L5 5Z" fill="#fff" />
        </svg>
      </div>
      <div className="mt-[7px] size-[22px] rounded-full bg-[#c1d82f]" />
      <div className="-my-1 h-[474px] w-2 bg-[#c1d82f]" />
      <div className="size-[22px] rounded-full bg-[#c1d82f]" />
    </div>
  );
}

export default function App() {
  return (
    <div className="relative h-[955px] w-[1920px] overflow-hidden font-['Lato','Liberation_Sans',sans-serif]">
      <Viewport />
      <div className="absolute inset-x-0 top-0 h-[83px] bg-[#778714]" />
      <div className="relative flex h-full flex-col">
        <Header />
        <StageBar />
        <main className="flex flex-1">
          <Toolbar />
          <ObjectPanel />
          <Timeline />
          <ActionCards />
        </main>
      </div>
      <LayerSlider />
    </div>
  );
}
